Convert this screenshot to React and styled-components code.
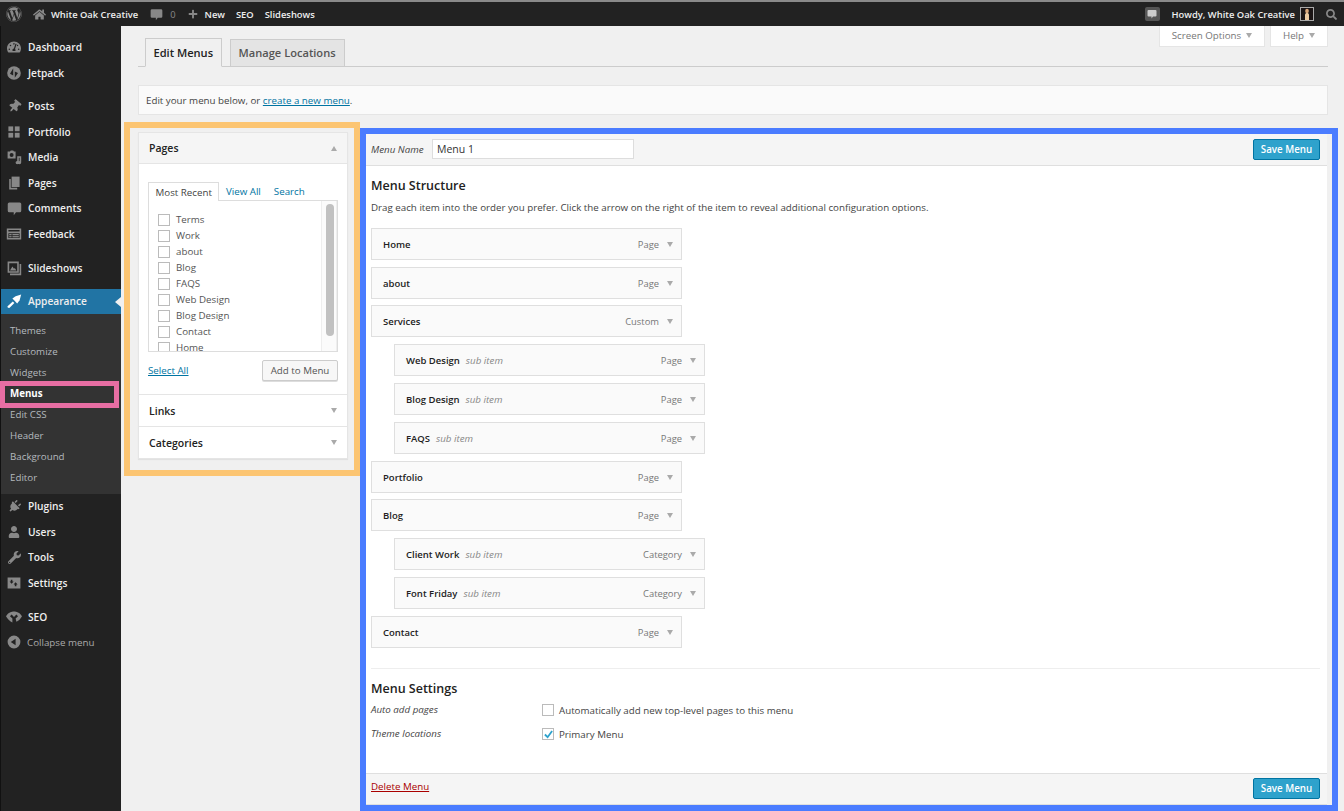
import React from 'react';
import styled, { createGlobalStyle } from 'styled-components';
import { FaWordpress, FaHome, FaPlus, FaSearch, FaTachometerAlt, FaThumbtack, FaPlug, FaUser, FaWrench } from 'react-icons/fa';

const GlobalStyle = createGlobalStyle`
    html, body {
        margin: 0;
        height: 811px;
        overflow: hidden;
        background: #f0f0f0;
        font-family: "Open Sans", "Liberation Sans", sans-serif;
        font-size: 9.75px;
        color: #444;
    }
    * { box-sizing: border-box; }
`;

const Page = styled.div`
    height: 811px;
    display: flex;
    flex-direction: column;
    overflow: hidden;
`;

const AdminBar = styled.div`
    height: 26px;
    flex: none;
    display: flex;
    align-items: center;
    background: #222;
    border-top: 2px solid #8a8a8a;
    color: #eee;
    font-size: 9.4px;
    font-weight: 600;
`;

const BarSlot = styled.span`
    display: flex;
    align-items: center;
    margin-left: ${p => p.$left}px;
    color: ${p => p.$muted ? '#888' : 'inherit'};
    font-weight: ${p => p.$muted ? 400 : 'inherit'};
`;

const BarSpacer = styled.div`
    flex: 1;
`;

const BarBubble = styled.span`
    width: 15px;
    height: 14px;
    display: flex;
    align-items: center;
    justify-content: center;
    border-radius: 2px;
    background: #555;
    color: #ccc;
`;

const Body = styled.div`
    flex: 1;
    display: flex;
    min-height: 0;
`;

const Sidebar = styled.div`
    width: 121px;
    flex: none;
    padding-top: 8.5px;
    background: #222;
    border-left: 1px solid #111;
`;

const MenuItem = styled.div`
    height: 25.5px;
    display: flex;
    align-items: center;
    position: relative;
    margin-top: ${p => p.$gap ? '8.2px' : 0};
    padding-left: 27px;
    color: ${p => p.$small ? '#aaa' : '#eee'};
    background: ${p => p.$active ? '#2174a4' : 'transparent'};
    font-size: ${p => p.$small ? '9.75px' : '10.2px'};
    font-weight: ${p => p.$small ? 400 : 600};
    ${p => p.$small && 'padding-left: 26px;'}
`;

const MenuIcon = styled.span`
    position: absolute;
    left: 5px;
    width: 16px;
    height: 16px;
    display: flex;
    align-items: center;
    justify-content: center;
    color: ${p => p.$active ? '#fff' : '#888'};
`;

const ActiveNotch = styled.span`
    position: absolute;
    right: 0;
    top: 8px;
    border-style: solid;
    border-width: 5px 6px 5px 0;
    border-color: transparent #f0f0f0 transparent transparent;
`;

const SubMenu = styled.div`
    padding: 6px 0 5.5px;
    background: #333;
`;

const SubItem = styled.div`
    height: 21px;
    display: flex;
    align-items: center;
    position: relative;
    padding-left: 9px;
    color: ${p => p.$current ? '#fff' : '#b4b9be'};
    font-size: 9.75px;
    font-weight: ${p => p.$current ? 700 : 400};
    ${p => p.$current && `
        &::after {
            content: '';
            position: absolute;
            left: -1px;
            right: 2px;
            top: -2.5px;
            bottom: -4px;
            border: 5.5px solid #e76ea3;
        }
    `}
`;

const Main = styled.div`
    flex: 1;
    min-width: 0;
    padding: 0 6px 0 3px;
`;

const TopRow = styled.div`
    height: 41px;
    margin: 0 10px 0 14px;
    display: flex;
    justify-content: space-between;
    align-items: flex-end;
    border-bottom: 1px solid #ccc;
`;

const Tabs = styled.div`
    display: flex;
    align-items: flex-end;
    gap: 8px;
    padding-left: 7px;
`;

const Tab = styled.div`
    height: ${p => p.$active ? '29px' : '27px'};
    margin-bottom: ${p => p.$active ? '-1px' : 0};
    padding: ${p => p.$active ? '0 7.5px' : '0 8px 1px'};
    display: flex;
    align-items: center;
    border: 1px solid #ccc;
    border-bottom: ${p => p.$active ? '1px solid #f0f0f0' : '0'};
    background: ${p => p.$active ? '#f0f0f0' : '#e4e4e4'};
    color: ${p => p.$active ? '#222' : '#555'};
    font-size: 11.1px;
    font-weight: 600;
`;

const ScreenTabs = styled.div`
    align-self: flex-start;
    display: flex;
    gap: 5px;
`;

const ScreenTab = styled.div`
    height: 21px;
    width: ${p => p.$width}px;
    padding-bottom: 1px;
    display: flex;
    align-items: center;
    justify-content: center;
    gap: 5px;
    background: #fff;
    border: 1px solid #e5e5e5;
    border-top: 0;
    color: #777;
    font-size: 9.75px;
`;

const Caret = styled.span`
    width: 0;
    height: 0;
    border-left: 3.5px solid transparent;
    border-right: 3.5px solid transparent;
    ${p => p.$up ? 'border-bottom: 5px solid #aaa;' : 'border-top: 5px solid #aaa;'}
`;

const Notice = styled.div`
    height: 30px;
    margin: 18px 10px 0 14px;
    padding-left: 7px;
    line-height: 30px;
    background: #fafafa;
    border: 1px solid #e5e5e5;
    font-size: 9.75px;
    color: #444;
`;

const TextLink = styled.a`
    color: ${p => p.$danger ? '#a00' : '#0074a2'};
    text-decoration: underline;
    font-size: 9.75px;
    ${p => p.$danger && 'margin-bottom: 4px;'}
`;

const Columns = styled.div`
    display: flex;
    align-items: flex-start;
    margin-top: 7px;
`;

const PagesFrame = styled.div`
    width: 236px;
    flex: none;
    padding: 4px 6px 10.5px 8px;
    border: 6px solid #fcc572;
`;

const Accordion = styled.div`
    background: #fff;
    border: 1px solid #e5e5e5;
    box-shadow: 0 1px 1px rgba(0, 0, 0, 0.06);
`;

const AccordionHead = styled.div`
    height: ${p => p.$open ? 31 : 32}px;
    padding: 0 10px;
    display: flex;
    align-items: center;
    justify-content: space-between;
    background: ${p => p.$open ? '#f5f5f5' : '#fff'};
    border-bottom: 1px solid #e5e5e5;
    color: #222;
    font-size: 10.5px;
    font-weight: 600;
    &:last-child {
        height: 31px;
        border-bottom: 0;
    }
`;

const PagesBody = styled.div`
    padding: 18px 9px 13px;
    border-bottom: 1px solid #e5e5e5;
`;

const PickerTabs = styled.div`
    height: 18px;
    display: flex;
    align-items: stretch;
    font-size: 9.75px;
`;

const PickerTab = styled.div`
    display: flex;
    align-items: center;
    padding: 1px 6.5px 0;
    margin-bottom: ${p => p.$active ? '-1px' : 0};
    height: ${p => p.$active ? '19px' : '18px'};
    position: relative;
    color: ${p => p.$active ? '#444' : '#0074a2'};
    background: #fff;
    border: ${p => p.$active ? '1px solid #ddd' : '0'};
    border-bottom: 0;
`;

const PickerBox = styled.div`
    height: 152px;
    display: flex;
    border: 1px solid #ddd;
    overflow: hidden;
`;

const PickerList = styled.div`
    flex: 1;
    padding: 10.5px 9px 0;
`;

const PickerRow = styled.div`
    height: 16px;
    display: flex;
    align-items: center;
    gap: 6px;
    color: #555;
    font-size: 9.75px;
`;

const Check = styled.span`
    width: 12px;
    height: 12px;
    flex: none;
    display: flex;
    align-items: center;
    justify-content: center;
    background: #fff;
    border: 1px solid #bbb;
`;

const Track = styled.div`
    width: 16px;
    flex: none;
    padding: 3px 4px 0;
    background: #fbfbfb;
    border-left: 1px solid #eee;
    border-right: 1px solid #eee;
`;

const Thumb = styled.div`
    width: 8px;
    height: 132px;
    border-radius: 4px;
    background: #c1c1c1;
`;

const PickerActions = styled.div`
    margin-top: 8px;
    display: flex;
    align-items: center;
    justify-content: space-between;
`;

const GrayButton = styled.div`
    width: 76px;
    height: 21px;
    display: flex;
    align-items: center;
    justify-content: center;
    background: #f7f7f7;
    border: 1px solid #ccc;
    border-radius: 2px;
    box-shadow: 0 1px 0 #ddd;
    color: #555;
    font-size: 9.75px;
`;

const MenuFrame = styled.div`
    width: 978px;
    flex: none;
    margin-top: 5.5px;
    height: 684px;
    border: 6px solid #4a7cff;
    border-bottom-width: 7px;
    padding-right: 5px;
    background: #f0f0f0;
    display: flex;
    flex-direction: column;
`;

const MenuHeader = styled.div`
    height: 32px;
    flex: none;
    padding: 0 7px 0 5px;
    display: flex;
    align-items: center;
    background: #f5f5f5;
    border-bottom: 1px solid #dfdfdf;
`;

const NameLabel = styled.span`
    width: 61px;
    font-size: 9.75px;
    font-style: italic;
    color: #444;
`;

const NameInput = styled.div`
    width: 202px;
    height: 20px;
    padding-left: 4px;
    display: flex;
    align-items: center;
    background: #fff;
    border: 1px solid #ddd;
    color: #333;
    font-size: 10.5px;
`;

const SaveButton = styled.div`
    width: 67px;
    height: 21px;
    margin-left: auto;
    display: flex;
    align-items: center;
    justify-content: center;
    background: #2ea2cc;
    border: 1px solid #0074a2;
    border-radius: 2px;
    color: #fff;
    font-size: 9.75px;
    font-weight: 600;
`;

const MenuBody = styled.div`
    flex: 1;
    padding: 0 7px 0 5px;
    background: #fff;
`;

const SectionTitle = styled.div`
    color: #222;
    font-size: 12.5px;
    font-weight: 600;
    line-height: 18px;
    margin-top: ${p => p.$top}px;
`;

const Description = styled.div`
    margin-top: 6px;
    margin-bottom: 13.4px;
    line-height: 14px;
    font-size: 9.75px;
    color: #444;
`;

const ItemRow = styled.div`
    width: 311px;
    height: 32px;
    margin-left: ${p => p.$sub ? 23 : 0}px;
    margin-bottom: 6.8px;
    padding: 1px 8px 0 11px;
    display: flex;
    align-items: center;
    background: #fafafa;
    border: 1px solid #dfdfdf;
`;

const ItemTitle = styled.span`
    color: #222;
    font-size: 9.5px;
    font-weight: 600;
`;

const ItemNote = styled.span`
    margin-left: 6px;
    color: #888;
    font-size: 9.75px;
    font-style: italic;
`;

const ItemType = styled.span`
    margin-left: auto;
    margin-right: 8px;
    color: #777;
    font-size: 9.4px;
`;

const Divider = styled.div`
    margin-top: 20.6px;
    border-top: 1px solid #eee;
`;

const SettingRow = styled.div`
    height: 24px;
    display: flex;
    align-items: center;
    &:first-of-type {
        margin-top: 1px;
    }
`;

const SettingName = styled.span`
    width: 171px;
    font-size: 9.75px;
    font-style: italic;
    color: #444;
    margin-top: -1px;
`;

const SettingLabel = styled.span`
    margin-left: 5px;
    font-size: 9.75px;
    color: #444;
`;

const MenuFooter = styled.div`
    height: 32px;
    flex: none;
    padding: 0 7px 0 5px;
    display: flex;
    align-items: center;
    background: #f5f5f5;
    border-top: 1px solid #dfdfdf;
    border-bottom: 1px solid #dfdfdf;
`;

const Avatar = () => (
    <svg width="14" height="14" viewBox="0 0 14 14" style={{ marginLeft: 5 }}>
        <rect x="0.5" y="0.5" width="13" height="13" fill="#1a1414" stroke="#aaa" />
        <ellipse cx="7" cy="4" rx="1.8" ry="2.2" fill="#d9a77a" />
        <path d="M5 13V8c0-1.500 1-2 2-2s2 .5 2 2v5z" fill="#e9c9a0" />
    </svg>
);

const Bubble = ({ size = 14 }) => (
    <svg width={size} height={size} viewBox="0 0 20 20" fill="currentColor">
        <path d="M3 2h14a2 2 0 0 1 2 2v9a2 2 0 0 1-2 2h-5l-3 4v-4H3a2 2 0 0 1-2-2V4a2 2 0 0 1 2-2z" />
    </svg>
);

const Glyph = ({ children }) => (
    <svg width="16" height="16" viewBox="0 0 20 20" fill="currentColor">{children}</svg>
);

const icons = {
    dashboard: <FaTachometerAlt size={14} />,
    jetpack: <Glyph><circle cx="10" cy="10" r="8.5" /><path d="M9 4v9L5 11z M11 16V8l4 2z" fill="#222" /></Glyph>,
    posts: <FaThumbtack size={13} style={{ transform: 'rotate(40deg)' }} />,
    portfolio: <Glyph><rect x="3" y="3" width="6" height="6" /><rect x="11" y="3" width="6" height="6" /><rect x="3" y="11" width="6" height="6" /><rect x="11" y="11" width="6" height="6" /></Glyph>,
    media: <Glyph><path fillRule="evenodd" d="M2 3h3l1-1h3l1 1h2v9H2zM7 5a2.500 2.500 0 1 0 0 5 2.500 2.500 0 0 0 0-5z" /><path d="M14 9h5v8a2 2 0 1 1-2-2v-4h-1v6a2 2 0 1 1-2-2z" /></Glyph>,
    pages: <Glyph><path d="M7 2h10v13H7z" /><path d="M4 5h2v11h8v2H4z" /></Glyph>,
    comments: <Bubble size={15} />,
    feedback: <Glyph><path fillRule="evenodd" d="M1 3h18v14H1zM3 5v2h14V5zM3 9v6h14V9z" /><rect x="4" y="10" width="3" height="1.600" /><rect x="4" y="12.600" width="3" height="1.600" /><rect x="8" y="10" width="8" height="1.600" /><rect x="8" y="12.600" width="8" height="1.600" /></Glyph>,
    slideshows: <Glyph><path fillRule="evenodd" d="M2 2h14v14H2zM4 4v10h10V4z" /><path d="M5 13l3-5 2 3 1-1 2 3z M17 5h2v14H5v-2h12z" /></Glyph>,
    appearance: <Glyph><path d="M8 7l4-3 7-2-2 7-3 4z" /><path d="M8.500 10.500l2 2-6 6c-1 1-3.500-1-2.500-2z" /></Glyph>,
    plugins: <FaPlug size={13} style={{ transform: 'rotate(45deg)' }} />,
    users: <FaUser size={12} />,
    tools: <FaWrench size={13} />,
    settings: <Glyph><path fillRule="evenodd" d="M2 3h16v14H2zM6 6v2H4.500L7 11l2.500-3H8V6zM13 14v-2h1.500L12 9l-2.500 3H11v2z" /></Glyph>,
    seo: <Glyph><path d="M0 9C3 4 7 3 10 3s7 1 10 6c-2 4-5 6-7 7l-1-4 3-3-2-2-3 3-3-3-2 2 3 3v5C5 15 2 13 0 9z" /></Glyph>,
    collapse: <Glyph><path fillRule="evenodd" d="M10 2a8 8 0 1 1 0 16 8 8 0 0 1 0-16zm2 4l-6 4 6 4z" /></Glyph>,
};

const topMenu = [
    { label: 'Dashboard', icon: 'dashboard' },
    { label: 'Jetpack', icon: 'jetpack' },
    { label: 'Posts', icon: 'posts', gap: true },
    { label: 'Portfolio', icon: 'portfolio' },
    { label: 'Media', icon: 'media' },
    { label: 'Pages', icon: 'pages' },
    { label: 'Comments', icon: 'comments' },
    { label: 'Feedback', icon: 'feedback' },
    { label: 'Slideshows', icon: 'slideshows', gap: true },
];

const bottomMenu = [
    { label: 'Plugins', icon: 'plugins' },
    { label: 'Users', icon: 'users' },
    { label: 'Tools', icon: 'tools' },
    { label: 'Settings', icon: 'settings' },
    { label: 'SEO', icon: 'seo', gap: true },
    { label: 'Collapse menu', icon: 'collapse', small: true },
];

const subMenu = ['Themes', 'Customize', 'Widgets', 'Menus', 'Edit CSS', 'Header', 'Background', 'Editor'];

const pages = ['Terms', 'Work', 'about', 'Blog', 'FAQS', 'Web Design', 'Blog Design', 'Contact', 'Home'];

const items = [
    { title: 'Home', type: 'Page' },
    { title: 'about', type: 'Page' },
    { title: 'Services', type: 'Custom' },
    { title: 'Web Design', type: 'Page', sub: true },
    { title: 'Blog Design', type: 'Page', sub: true },
    { title: 'FAQS', type: 'Page', sub: true },
    { title: 'Portfolio', type: 'Page' },
    { title: 'Blog', type: 'Page' },
    { title: 'Client Work', type: 'Category', sub: true },
    { title: 'Font Friday', type: 'Category', sub: true },
    { title: 'Contact', type: 'Page' },
];

const renderMenu = (list) => list.map((item) => (
    <MenuItem key={item.label} $gap={item.gap} $small={item.small}>
        <MenuIcon>{icons[item.icon]}</MenuIcon>
        {item.label}
    </MenuItem>
));

export default function App() {
    return (
        <Page>
            <GlobalStyle />
            <AdminBar>
                <BarSlot $left={6} $muted><FaWordpress size={16} /></BarSlot>
                <BarSlot $left={11} $muted><FaHome size={13} /></BarSlot>
                <BarSlot $left={5}>White Oak Creative</BarSlot>
                <BarSlot $left={12} $muted><Bubble size={13} /></BarSlot>
                <BarSlot $left={7} $muted>0</BarSlot>
                <BarSlot $left={12} $muted><FaPlus size={10} /></BarSlot>
                <BarSlot $left={7}>New</BarSlot>
                <BarSlot $left={11}>SEO</BarSlot>
                <BarSlot $left={11}>Slideshows</BarSlot>
                <BarSpacer />
                <BarBubble><Bubble size={10} /></BarBubble>
                <BarSlot $left={12}>Howdy, White Oak Creative</BarSlot>
                <Avatar />
                <BarSlot $left={12} $muted><FaSearch size={11} /></BarSlot>
                <BarSlot $left={7} />
            </AdminBar>
            <Body>
                <Sidebar>
                    {renderMenu(topMenu)}
                    <MenuItem $gap $active>
                        <MenuIcon $active>{icons.appearance}</MenuIcon>
                        Appearance
                        <ActiveNotch />
                    </MenuItem>
                    <SubMenu>
                        {subMenu.map((label) => (
                            <SubItem key={label} $current={label === 'Menus'}>{label}</SubItem>
                        ))}
                    </SubMenu>
                    {renderMenu(bottomMenu)}
                </Sidebar>
                <Main>
                    <TopRow>
                        <Tabs>
                            <Tab $active>Edit Menus</Tab>
                            <Tab>Manage Locations</Tab>
                        </Tabs>
                        <ScreenTabs>
                            <ScreenTab $width={106}>Screen Options <Caret /></ScreenTab>
                            <ScreenTab $width={58}>Help <Caret /></ScreenTab>
                        </ScreenTabs>
                    </TopRow>
                    <Notice>
                        Edit your menu below, or <TextLink>create a new menu</TextLink>.
                    </Notice>
                    <Columns>
                        <PagesFrame>
                            <Accordion>
                                <AccordionHead $open>Pages <Caret $up /></AccordionHead>
                                <PagesBody>
                                    <PickerTabs>
                                        <PickerTab $active>Most Recent</PickerTab>
                                        <PickerTab>View All</PickerTab>
                                        <PickerTab>Search</PickerTab>
                                    </PickerTabs>
                                    <PickerBox>
                                        <PickerList>
                                            {pages.map((page) => (
                                                <PickerRow key={page}><Check />{page}</PickerRow>
                                            ))}
                                        </PickerList>
                                        <Track><Thumb /></Track>
                                    </PickerBox>
                                    <PickerActions>
                                        <TextLink>Select All</TextLink>
                                        <GrayButton>Add to Menu</GrayButton>
                                    </PickerActions>
                                </PagesBody>
                                <AccordionHead>Links <Caret /></AccordionHead>
                                <AccordionHead>Categories <Caret /></AccordionHead>
                            </Accordion>
                        </PagesFrame>
                        <MenuFrame>
                            <MenuHeader>
                                <NameLabel>Menu Name</NameLabel>
                                <NameInput>Menu 1</NameInput>
                                <SaveButton>Save Menu</SaveButton>
                            </MenuHeader>
                            <MenuBody>
                                <SectionTitle $top={11}>Menu Structure</SectionTitle>
                                <Description>Drag each item into the order you prefer. Click the arrow on the right of the item to reveal additional configuration options.</Description>
                                {items.map((item) => (
                                    <ItemRow key={item.title} $sub={item.sub}>
                                        <ItemTitle>{item.title}</ItemTitle>
                                        {item.sub && <ItemNote>sub item</ItemNote>}
                                        <ItemType>{item.type}</ItemType>
                                        <Caret />
                                    </ItemRow>
                                ))}
                                <Divider />
                                <SectionTitle $top={11}>Menu Settings</SectionTitle>
                                <SettingRow>
                                    <SettingName>Auto add pages</SettingName>
                                    <Check />
                                    <SettingLabel>Automatically add new top-level pages to this menu</SettingLabel>
                                </SettingRow>
                                <SettingRow>
                                    <SettingName>Theme locations</SettingName>
                                    <Check>
                                        <svg width="9" height="9" viewBox="0 0 10 10"><path d="M1 5l3 3 5-7" fill="none" stroke="#2ea2cc" strokeWidth="2" /></svg>
                                    </Check>
                                    <SettingLabel>Primary Menu</SettingLabel>
                                </SettingRow>
                            </MenuBody>
                            <MenuFooter>
                                <TextLink $danger>Delete Menu</TextLink>
                                <SaveButton>Save Menu</SaveButton>
                            </MenuFooter>
                        </MenuFrame>
                    </Columns>
                </Main>
            </Body>
        </Page>
    );
}
